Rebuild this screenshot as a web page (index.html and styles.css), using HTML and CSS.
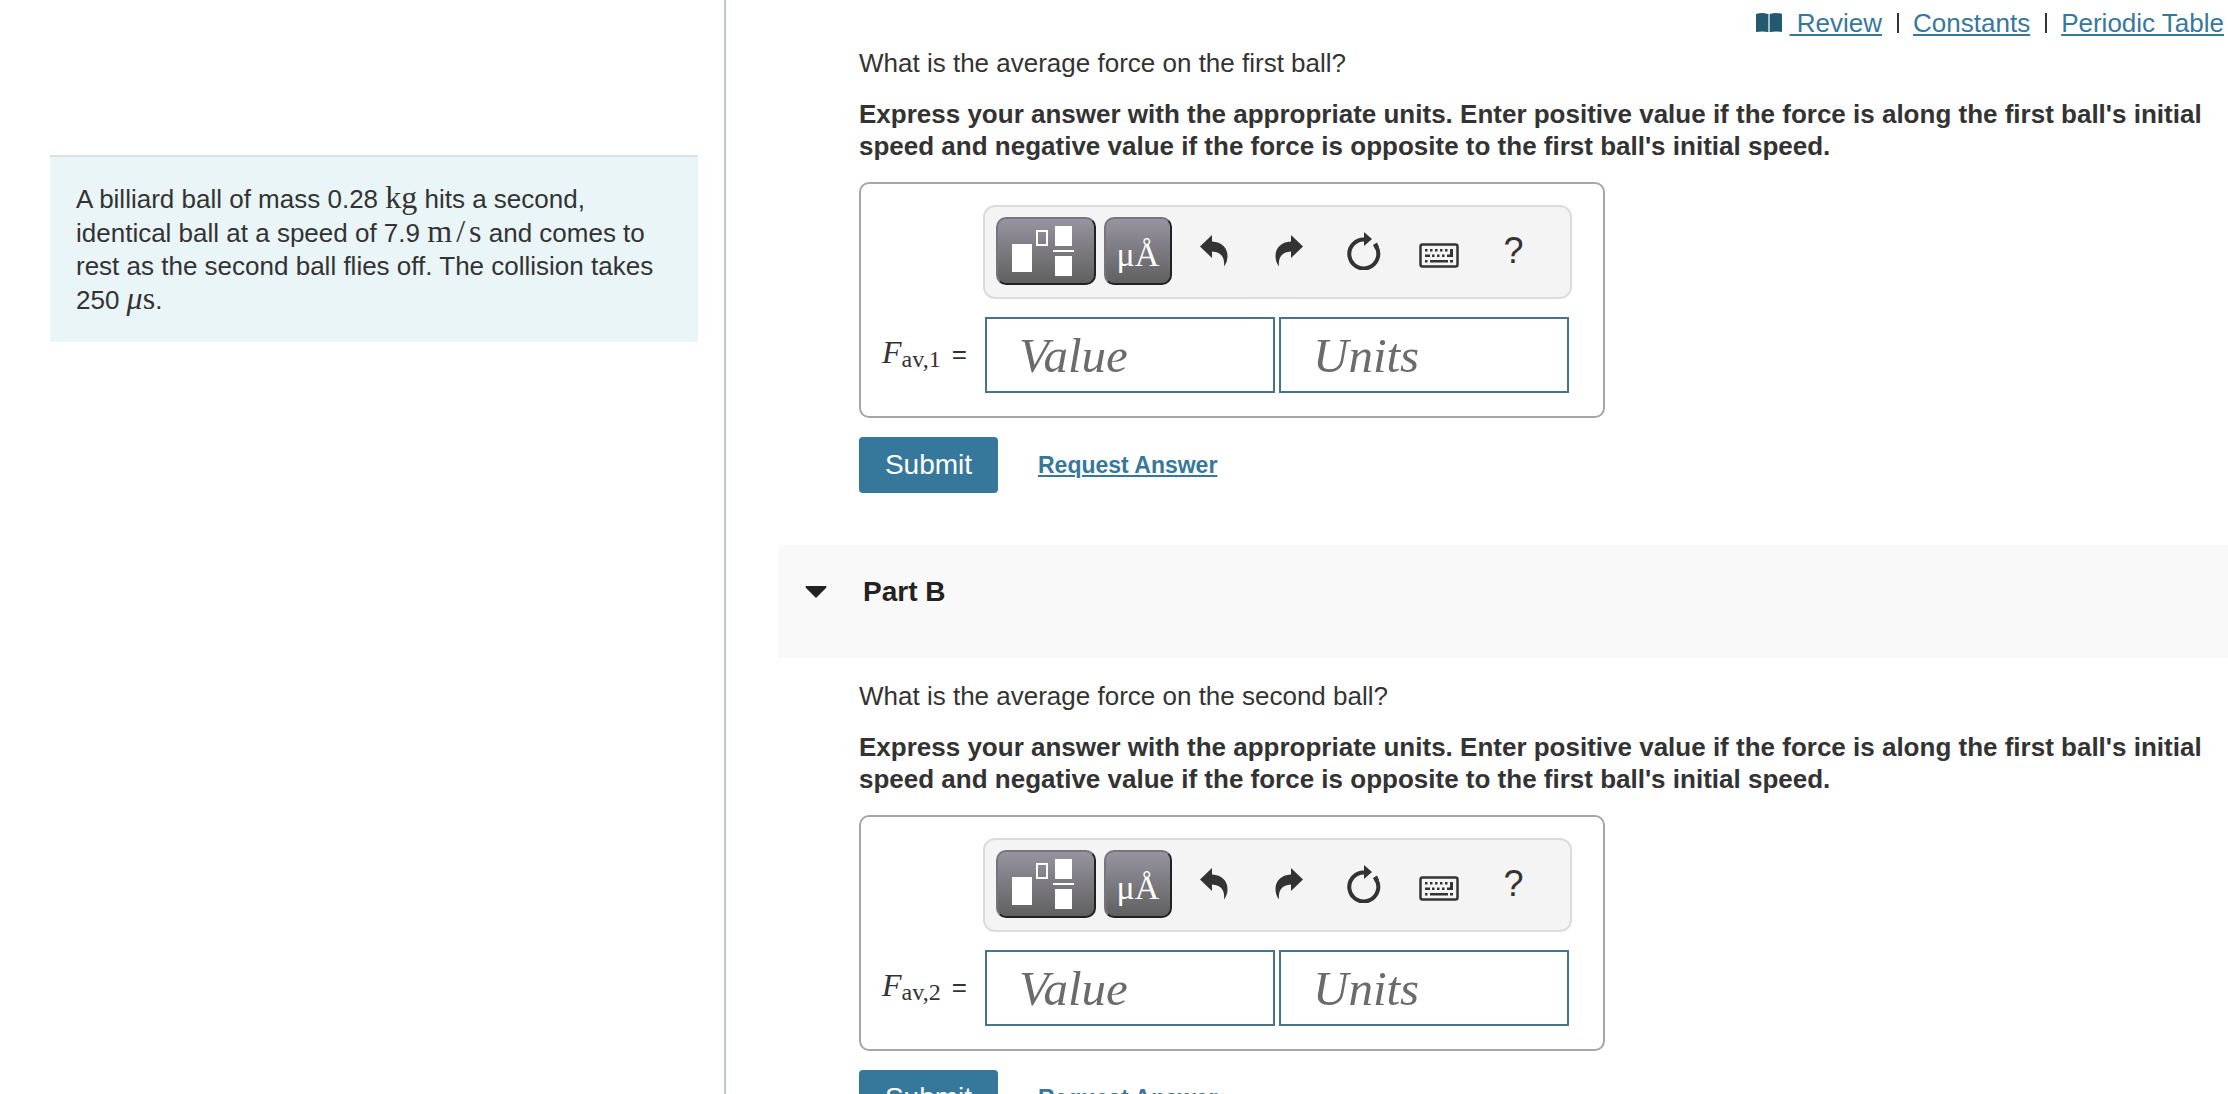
FILE: index.html
```html
<!DOCTYPE html>
<html lang="en">
<head>
<meta charset="utf-8">
<title>Average force on billiard balls</title>
<link rel="stylesheet" href="styles.css">
</head>
<body>
<svg class="sprite" aria-hidden="true">
  <symbol id="icon-templates" viewBox="0 0 62 52">
    <path fill="#fff" d="M0 19h20v28H0zM43 1h17v20H43zM41 25h21v2H41zM43 31h17v20H43z"/>
    <path fill="none" stroke="#fff" stroke-width="2" d="M25 6h10v14H25z"/>
  </symbol>
  <symbol id="icon-undo" viewBox="0 0 28 32">
    <path d="M0 11.500 12 0v6.500C22 7 27.500 13 27.500 21c0 4-1 7-3.500 10.500C25 22 21 17 12 16.500V23z"/>
  </symbol>
  <symbol id="icon-redo" viewBox="0 0 28 32">
    <path d="M28 11.500 16 0v6.500C6 7 .5 13 .5 21c0 4 1 7 3.500 10.500C3 22 7 17 16 16.500V23z"/>
  </symbol>
  <symbol id="icon-reset" viewBox="0 0 34 38">
    <path fill="none" stroke="#333" stroke-width="4" d="M18 7.500A14.500 14.500 0 1 0 29.500 15"/>
    <path d="M17 0 25 7 17 14z"/><path d="m26 13 4-2.500 2 4.500-4 2z"/>
  </symbol>
  <symbol id="icon-keyboard" viewBox="0 0 40 26">
    <rect x="1.500" y="1.500" width="37" height="22" rx="2" fill="none" stroke="#333" stroke-width="2.500"/>
    <path d="M6 6h2.500v2.500H6zM11 6h2.500v2.500H11zM16 6h2.500v2.500H16zM21 6h2.500v2.500H21zM26 6h2.500v2.500H26zM31 6h3v8h-6v-2.500h3zM6 11.500h5V14H6zM13 11.500h2.500V14H13zM18 11.500h2.500V14H18zM23 11.500h2.500V14H23zM6 17h2.500v2.500H6zM11 17h18v2.500H11zM31 17h3v2.500h-3z"/>
  </symbol>
</svg>
<div class="page">
  <aside class="sidebar">
    <p class="problem">A billiard ball of mass 0.28 <span class="math">kg</span> hits a second, identical ball at a speed of 7.9 <span class="math">m<span class="slash">/</span>s</span> and comes to rest as the second ball flies off. The collision takes 250 <span class="math"><i>μ</i>s</span>.</p>
  </aside>
  <main class="content">
    <nav class="resources">
      <svg class="book" viewBox="0 0 26 20" aria-hidden="true"><path fill="#245a70" d="M0 1q6-2 12 0v18q-6-1-12 0zM14 1q6-2 12 0v18q-6-1-12 0z"/><path fill="#a9bdc6" d="M12 1h2v18h-2z"/></svg>
      <a href="#review">&nbsp;Review</a><span class="bar"></span><a href="#constants">Constants</a><span class="bar"></span><a href="#periodic">Periodic Table</a>
    </nav>

    <section class="part">
      <p class="question">What is the average force on the first ball?</p>
      <p class="instructions">Express your answer with the appropriate units. Enter positive value if the force is along the first ball's initial speed and negative value if the force is opposite to the first ball's initial speed.</p>
      <div class="answer">
        <div class="toolbar">
          <button class="tool templates" type="button" aria-label="Templates"><svg><use href="#icon-templates"/></svg></button>
          <button class="tool symbols" type="button">μÅ</button>
          <div class="actions">
            <button class="action" type="button" aria-label="Undo"><svg class="arrow"><use href="#icon-undo"/></svg></button>
            <button class="action" type="button" aria-label="Redo"><svg class="arrow"><use href="#icon-redo"/></svg></button>
            <button class="action" type="button" aria-label="Reset"><svg class="reset"><use href="#icon-reset"/></svg></button>
            <button class="action" type="button" aria-label="Keyboard shortcuts"><svg class="keyboard"><use href="#icon-keyboard"/></svg></button>
            <button class="action" type="button">?</button>
          </div>
        </div>
        <label class="quantity" for="value-a"><span class="symbol"><i>F</i><span class="index">av,1</span></span><span>=</span></label>
        <div class="fields">
          <input id="value-a" type="text" placeholder="Value">
          <input type="text" placeholder="Units" aria-label="Units">
        </div>
      </div>
      <div class="controls">
        <button class="submit" type="button">Submit</button>
        <a class="request" href="#answer-a">Request Answer</a>
      </div>
    </section>

    <h2 class="part-title"><svg class="caret" viewBox="0 0 22 12" aria-hidden="true"><path fill="#222" d="M1 0h20q1 1 0 2l-10 10L1 2q-1-1 0-2z"/></svg>Part B</h2>

    <section class="part">
      <p class="question">What is the average force on the second ball?</p>
      <p class="instructions">Express your answer with the appropriate units. Enter positive value if the force is along the first ball's initial speed and negative value if the force is opposite to the first ball's initial speed.</p>
      <div class="answer">
        <div class="toolbar">
          <button class="tool templates" type="button" aria-label="Templates"><svg><use href="#icon-templates"/></svg></button>
          <button class="tool symbols" type="button">μÅ</button>
          <div class="actions">
            <button class="action" type="button" aria-label="Undo"><svg class="arrow"><use href="#icon-undo"/></svg></button>
            <button class="action" type="button" aria-label="Redo"><svg class="arrow"><use href="#icon-redo"/></svg></button>
            <button class="action" type="button" aria-label="Reset"><svg class="reset"><use href="#icon-reset"/></svg></button>
            <button class="action" type="button" aria-label="Keyboard shortcuts"><svg class="keyboard"><use href="#icon-keyboard"/></svg></button>
            <button class="action" type="button">?</button>
          </div>
        </div>
        <label class="quantity" for="value-b"><span class="symbol"><i>F</i><span class="index">av,2</span></span><span>=</span></label>
        <div class="fields">
          <input id="value-b" type="text" placeholder="Value">
          <input type="text" placeholder="Units" aria-label="Units">
        </div>
      </div>
      <div class="controls">
        <button class="submit" type="button">Submit</button>
        <a class="request" href="#answer-b">Request Answer</a>
      </div>
    </section>
  </main>
</div>
</body>
</html>
```
FILE: styles.css
```css
* { box-sizing: border-box; }
body {
  margin: 0;
  background: #fff;
  color: #333;
  font-family: "Liberation Sans", Arial, sans-serif;
  font-size: 26px;
  line-height: 32px;
}
p, h2 { margin: 0; }
a { color: #36789b; text-underline-offset: 2px; text-decoration-thickness: 2px; }
button { font-family: inherit; padding: 0; cursor: pointer; }
.sprite { display: none; }

.page { display: flex; height: 100vh; overflow: hidden; }
.sidebar {
  flex: 0 0 726px;
  padding: 155px 26px 0 50px;
  border-right: 2px solid #b8c8d6;
}
.problem {
  padding: 25px 26px;
  border-top: 2px solid #dbe2e2;
  background: #eaf5f8;
  line-height: 33px;
}
.math {
  font-family: "Liberation Serif", serif;
  font-size: 32px;
  line-height: 30px;
}
.slash { padding: 0 4px; }

.content { flex: 1; min-width: 0; overflow: hidden; }
.resources {
  display: flex;
  justify-content: flex-end;
  align-items: center;
  padding: 7px 4px 8px;
}
.book { width: 26px; height: 20px; margin-right: 8px; }
.bar { width: 2px; height: 20px; margin: 0 14px 0 15px; background: #333; }

.part { padding: 0 20px 52px 133px; }
.instructions { margin: 19px 0 20px; font-weight: bold; }

.answer {
  display: grid;
  grid-template-columns: 101px 1fr;
  row-gap: 18px;
  max-width: 746px;
  padding: 21px 31px 23px 21px;
  border: 2px solid #a6a6a6;
  border-radius: 10px;
}
.toolbar {
  grid-column: 2;
  display: flex;
  gap: 8px;
  padding: 10px 11px 12px;
  border: 2px solid #dcdcdc;
  border-radius: 12px;
  background: #f4f4f4;
}
.tool {
  display: flex;
  align-items: center;
  justify-content: center;
  height: 68px;
  border: 2px solid;
  border-color: #77757c #222 #222 #77757c;
  border-radius: 10px;
  background: linear-gradient(#97949f, #606060);
  color: #fff;
}
.templates { width: 100px; padding-right: 6px; }
.templates svg { width: 62px; height: 52px; }
.symbols {
  width: 68px;
  padding-top: 8px;
  font-family: "Liberation Serif", serif;
  font-size: 34px;
}
.actions { flex: 1; display: flex; margin-left: -4px; }
.action {
  display: flex;
  align-items: center;
  justify-content: center;
  width: 75px;
  border: 0;
  background: none;
  color: #333;
  font-size: 36px;
}
.action svg { fill: #333; }
.arrow { width: 28px; height: 32px; }
.reset { width: 34px; height: 38px; }
.keyboard { width: 40px; height: 26px; margin-top: 10px; }

.quantity { display: flex; align-items: center; gap: 11px; padding-bottom: 3px; }
.symbol { font-family: "Liberation Serif", serif; font-size: 32px; }
.index { font-size: 24px; position: relative; top: 4px; }
.fields { display: grid; grid-template-columns: 1fr 1fr; gap: 4px; padding: 0 3px 0 2px; }
.fields input {
  width: 100%;
  height: 76px;
  padding: 0 32px;
  border: 2px solid #45748c;
  border-radius: 0;
  background: #fff;
  color: #333;
  font-family: "Liberation Serif", serif;
  font-size: 49px;
  font-style: italic;
}
.fields input::placeholder { color: #6b6b6b; opacity: 1; }

.controls { display: flex; align-items: center; gap: 40px; margin-top: 19px; }
.submit {
  width: 139px;
  height: 56px;
  border: 0;
  border-radius: 4px;
  background: #36789b;
  color: #fff;
  font-size: 28px;
}
.request { font-size: 23px; font-weight: bold; }

.part-title {
  display: flex;
  align-items: center;
  gap: 36px;
  margin: 0 0 22px 52px;
  padding: 31px 27px 50px;
  background: #f9f9f9;
  color: #222;
  font-size: 28px;
}
.caret { width: 22px; height: 12px; }
```
